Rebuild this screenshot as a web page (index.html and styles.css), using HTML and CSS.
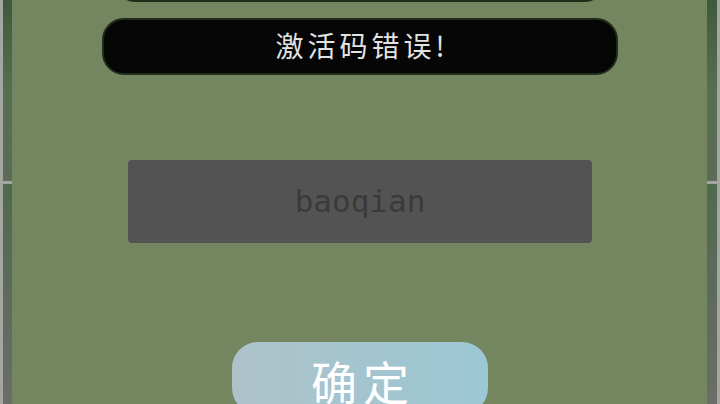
FILE: index.html
```html
<!DOCTYPE html>
<html lang="zh-CN">

<head>
    <meta charset="utf-8">
    <meta name="viewport" content="width=device-width, initial-scale=1.0">
    <title>激活</title>
    <link rel="stylesheet" href="styles.css">
</head>

<body>

<div class="page">
    <!-- 左侧背景条 -->
    <div class="side side-left">
        <div class="tile"></div>
        <div class="tile"></div>
    </div>

    <!-- 激活弹窗 -->
    <div class="dialog">
        <div class="bar bar-top"></div>
        <div class="bar">激活码错误!</div>

        <div class="code">baoqian</div>

        <button class="ok">确定</button>
    </div>

    <!-- 右侧背景条 -->
    <div class="side side-right">
        <div class="tile"></div>
        <div class="tile"></div>
    </div>
</div>

</body>

</html>
```

FILE: styles.css
```css
/* 全局样式 */
*
{
    margin: 0;
    box-sizing: border-box;
}

body
{
    width: 720px;
    height: 404px;
    overflow: hidden;
    background-color: #a3a6a2;
    font-family: "Noto Sans CJK SC", sans-serif;
}

.page
{
    display: flex;
    height: 404px;
}

/* 两侧背景条 */
.side
{
    display: flex;
    flex-direction: column;
    gap: 3px;
}

.side-left
{
    width: 12px;
    padding-left: 3px;
}

.side-right
{
    width: 13px;
    padding-right: 3px;
}

.side .tile
{
    flex: 1;
    background: linear-gradient(180deg, #4f6a4c 0%, #5b6a5a 40%, #6b6e66 100%);
}

.side .tile:first-child
{
    flex: 0 0 181px;
    background: linear-gradient(180deg, #3f5a3a 0%, #56704f 50%, #5d6b58 100%);
}

/* 弹窗主体 */
.dialog
{
    flex: 1;
    background-color: #748660;
    display: flex;
    flex-direction: column;
    align-items: center;
    overflow: hidden;
}

.dialog > *
{
    flex-shrink: 0;
}

.bar
{
    width: 516px;
    height: 57px;
    margin-top: 16px;
    margin-left: 1px;
    border: 2px solid #1f2c18;
    border-radius: 22px;
    background-color: #060606;
    color: #e2e2e2;
    font-size: 28px;
    line-height: 51px;
    text-align: center;
    letter-spacing: 4px;
    padding-left: 4px;
}

.bar-top
{
    width: 490px;
    height: 40px;
    margin-top: -38px;
    margin-left: 1px;
}

/* 激活码显示框 */
.code
{
    width: 464px;
    height: 83px;
    margin-top: 85px;
    margin-left: 1px;
    border-radius: 4px;
    background-color: #535353;
    color: #3a3a3a;
    font-family: "DejaVu Sans Mono", monospace;
    font-size: 31px;
    line-height: 83px;
    text-align: center;
}

/* 确定按钮 */
.ok
{
    width: 256px;
    height: 72px;
    margin-top: 99px;
    margin-left: 1px;
    border: none;
    border-radius: 26px;
    background: linear-gradient(90deg, #aec2c8 0%, #a2c5d0 60%, #9cc7d4 100%);
    color: #ffffff;
    font-family: "Noto Sans CJK SC", sans-serif;
    font-size: 46px;
    line-height: 60px;
    padding: 4px 0 0 6px;
    letter-spacing: 6px;
}
```
